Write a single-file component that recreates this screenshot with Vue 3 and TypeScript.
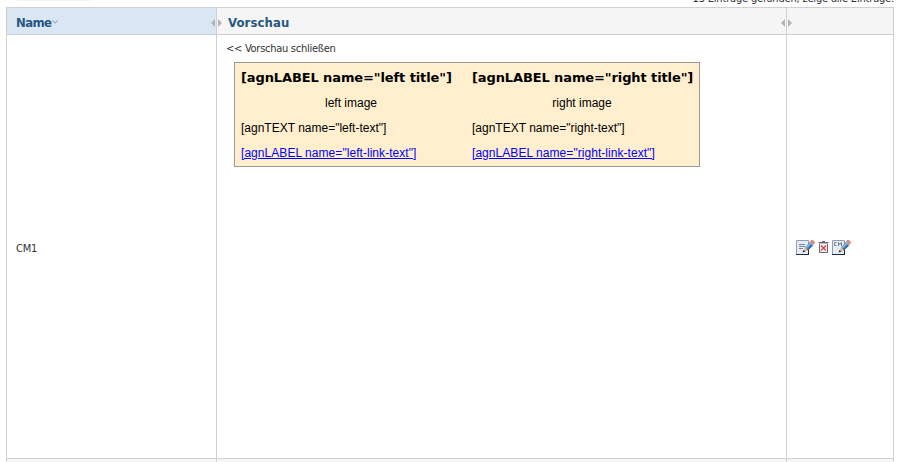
<script setup lang="ts">
interface Block {
  side: string
  title: string
  image: string
  text: string
  link: string
}

const blocks: Block[] = ['left', 'right'].map((side) => ({
  side,
  title: `[agnLABEL name="${side} title"]`,
  image: `${side} image`,
  text: `[agnTEXT name="${side}-text"]`,
  link: `[agnLABEL name="${side}-link-text"]`,
}))
</script>

<template>
  <div class="page">
    <div class="topline">
      <span class="stub"></span>
      <span class="count">13 Einträge gefunden, zeige alle Einträge.</span>
    </div>
    <div class="table">
      <div class="cell head sorted">
        <span class="label">Name</span>
        <svg class="caret" width="6" height="4" viewBox="0 0 6 4"><path d="M.5 .5L3 3L5.5 .5" fill="none" stroke="#b0b4b8" stroke-width="1.3" /></svg>
        <svg class="resize" width="11" height="8" viewBox="0 0 11 8"><path d="M4 0V8L0 4ZM7 0V8L11 4Z" fill="#b3b3b3" /></svg>
      </div>
      <div class="cell head preview-head">
        <span>Vorschau</span>
        <svg class="resize" width="11" height="8" viewBox="0 0 11 8"><path d="M4 0V8L0 4ZM7 0V8L11 4Z" fill="#b3b3b3" /></svg>
      </div>
      <div class="cell head"></div>

      <div class="cell name">CM1</div>
      <div class="cell preview">
        <div class="close">&lt;&lt; Vorschau schließen</div>
        <div class="box">
          <div v-for="b in blocks" :key="b.side" class="block" :class="b.side">
            <div class="title"><span>{{ b.title }}</span></div>
            <div class="image"><span>{{ b.image }}</span></div>
            <div class="text"><span>{{ b.text }}</span></div>
            <div class="link"><a href="#">{{ b.link }}</a></div>
          </div>
        </div>
      </div>
      <div class="cell actions">
        <svg v-for="kind in ['edit', 'trash', 'cms']" :key="kind" :class="kind" :width="kind === 'trash' ? 11 : 19" height="17" :viewBox="kind === 'trash' ? '0 0 11 17' : '0 0 19 17'">
          <template v-if="kind === 'trash'">
            <path d="M1.5 4.5V13.5H9.5V4.5" fill="#f0f0f5" stroke="#66686c" />
            <path d="M4 2.5H7M.5 3.5H10.5" fill="none" stroke="#66686c" />
            <path d="M1 4.5H10" stroke="#b5b6ba" />
            <path d="M3 6.5L8 11.5M8 6.5L3 11.5" stroke="#e0303d" stroke-width="1.1" />
          </template>
          <template v-else>
            <path d="M.5 1.5H12.5V15.5H.5Z" fill="#e6ebf4" stroke="#929db2" />
            <path d="M0 15.5H13M12.5 8V16" stroke="#1d2b4b" />
            <path v-if="kind === 'edit'" d="M3 5.5H9M3 7.5H9M3 9.5H7" stroke="#76859b" />
            <path v-else d="M4.5 3.5H2.5V6.5H4.5M6.5 7V3.5L8 5.500L9.500 3.500V7" fill="none" stroke="#596579" stroke-width=".8" />
            <path d="M9 8.500L14 3L17.500 6L12 11.500Z" fill="#4b82bf" />
            <path d="M9.500 8.500L14 4L15 5L10.500 9.500Z" fill="#8bbde8" />
            <path d="M11.500 11L16.500 6" stroke="#294779" />
            <path d="M7 13L9 8.500L12 11.500Z" fill="#e7b88e" />
            <path d="M6.500 13.500L7.500 11L9.500 12.500Z" fill="#252b3a" />
            <path d="M13 3.500L15 1.500L18 4.500L16.500 6.500Z" fill="#a3abc0" />
            <path d="M15 1H17L19 3V4L17.500 5.500L14.500 2.500Z" fill="#dc8d85" />
          </template>
        </svg>
      </div>

      <div class="cell next"></div>
      <div class="cell next"></div>
      <div class="cell next"></div>
    </div>
  </div>
</template>

<style>
body {
  margin: 0;
  background: #fff;
  overflow: hidden;
}
</style>

<style scoped>
.page {
  width: 898px;
  height: 462px;
  overflow: hidden;
  font-family: "DejaVu Sans Condensed", "DejaVu Sans", sans-serif;
  font-size: 11px;
  color: #333;
}
.topline {
  height: 7px;
  display: flex;
  justify-content: space-between;
  padding: 0 4px 0 17px;
}
.stub {
  width: 74px;
  height: 1px;
  background: #f3f3f3;
}
.count {
  height: 14px;
  line-height: 14px;
  margin-top: -8px;
  letter-spacing: -0.18px;
  white-space: nowrap;
}
.table {
  display: grid;
  width: 888px;
  box-sizing: border-box;
  margin-left: 6px;
  grid-template-columns: 210px 570px 107px;
  grid-template-rows: 27px 424px 10px;
  border-left: 1px solid #d0d0d0;
  border-top: 1px solid #d0d0d0;
}
.cell {
  box-sizing: border-box;
  border-right: 1px solid #d0d0d0;
  border-bottom: 1px solid #d0d0d0;
}
.head {
  position: relative;
  display: flex;
  align-items: center;
  padding: 2px 0 0 9px;
  background: #f5f5f5;
  color: #275780;
  font: bold 13px "DejaVu Sans Condensed", "DejaVu Sans", sans-serif;
}
.sorted {
  background: #d9e6f3;
}
.label {
  letter-spacing: -0.6px;
}
.caret {
  margin-left: 1px;
}
.preview-head {
  padding-left: 11px;
  letter-spacing: 0.1px;
}
.resize {
  position: absolute;
  z-index: 1;
  right: -6px;
  top: 11px;
}
.name {
  display: flex;
  align-items: center;
  padding: 3px 0 0 9px;
  letter-spacing: -0.2px;
}
.close {
  margin: 7px 0 0 9px;
  height: 14px;
  line-height: 14px;
  letter-spacing: -0.27px;
}
.box {
  box-sizing: border-box;
  width: 466px;
  height: 105px;
  margin: 6px 0 0 17px;
  padding: 1px 0 0 6px;
  display: grid;
  grid-template-columns: 231px 221px;
  border: 1px solid #999;
  background: #ffefcf;
  color: #000;
  font: 12px "Liberation Sans", Arial, sans-serif;
  white-space: nowrap;
}
.title {
  height: 27px;
  font: bold 13px/27px "DejaVu Sans", Verdana, sans-serif;
  letter-spacing: -0.11px;
}
.image {
  width: 220px;
  height: 25px;
  line-height: 25px;
  text-align: center;
}
.text,
.link {
  height: 25px;
  line-height: 25px;
}
.link a {
  color: #00f;
  letter-spacing: 0.05px;
}
.actions {
  display: flex;
  align-items: center;
  padding: 2px 0 0 9px;
}
.trash {
  margin: 0 3px;
}
.next {
  background: #f5f5f5;
}
</style>
